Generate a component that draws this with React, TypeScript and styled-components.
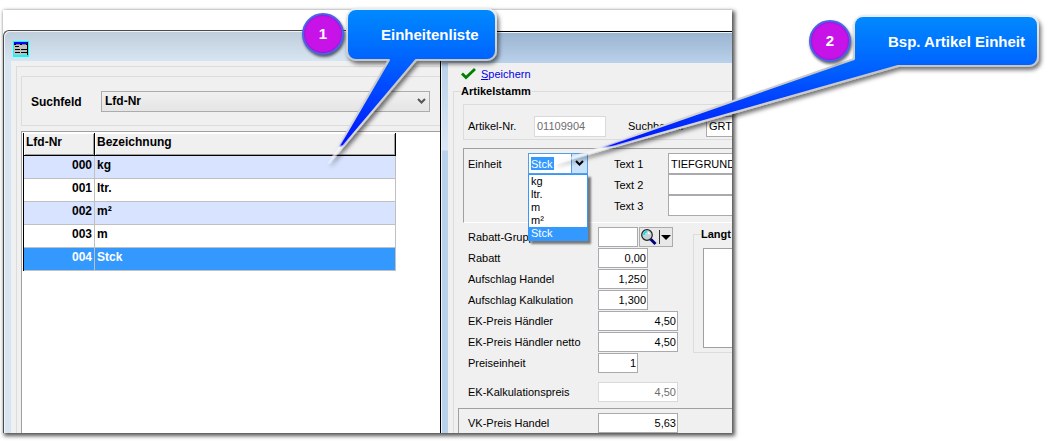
import React from 'react';
import styled, { createGlobalStyle, css } from 'styled-components';

const Global = createGlobalStyle`
  * { box-sizing: border-box; }
  body {
    margin: 0;
    background: #fff;
    color: #000;
    font-family: 'Liberation Sans', Arial, sans-serif;
    font-size: 11px;
    line-height: 14px;
  }
  input, select, textarea, button { font: inherit; color: inherit; }
`;

const boldText = css`
  font-size: 12px;
  font-weight: 700;
`;

const Page = styled.main`
  position: relative;
  min-width: 1051px;
  padding: 10px 319px 8px 3px;
`;

const Shot = styled.div`
  padding-top: 20px;
  overflow: hidden;
  background: #fff;
  box-shadow: 2px 2px 4px 1px rgba(0, 0, 0, 0.65), 0 0 2px rgba(0, 0, 0, 0.15);
`;

const Desktop = styled.div`
  display: grid;
  grid-template-columns: 437px minmax(0, 1fr);
`;

/* ---------- list window ---------- */

const ListWindow = styled.section`
  display: flex;
  flex-direction: column;
  border: solid #4a4a4a;
  border-width: 1px 0 0 1px;
  border-radius: 6px 0 0 0;
  padding-left: 7px;
  background: linear-gradient(#bfcddb, #d7e4f1 30px);
  box-shadow: inset 1px 1px 0 #eef4fa;
`;

const ListTitle = styled.header`
  height: 30px;
  padding: 10px 0 0 2px;
`;

const ListBody = styled.div`
  flex: 1;
  display: flex;
  padding: 5px 0 0 5px;
  background: #f0f0f0;
`;

const ListFrame = styled.div`
  flex: 1;
  display: flex;
  flex-direction: column;
  gap: 5px;
  padding: 9px 0 0 4px;
  border: solid #dcdcdc;
  border-width: 1px 0 0 1px;
`;

const SearchBar = styled.div`
  display: flex;
  align-items: center;
  height: 50px;
  padding-left: 9px;
  border: solid #dcdcdc;
  border-width: 1px 0 1px 1px;
  ${boldText}
`;

const SearchLabel = styled.label`
  width: 70px;
  padding-top: 2px;
`;

const SelectWrap = styled.div`
  position: relative;
  flex: 1;
  margin-right: 10px;
`;

const SearchSelect = styled.select`
  display: block;
  width: 100%;
  height: 21px;
  padding: 0 3px;
  appearance: none;
  border: 1px solid #acacac;
  border-radius: 0;
  background: linear-gradient(#f0f0f0, #e5e5e5);
`;

const Arrow = styled.svg`
  position: absolute;
  right: 4px;
  top: 7px;
  pointer-events: none;
`;

const TableArea = styled.div`
  flex: 1;
  padding: 1px 0 0 1px;
  border: solid #a0a0a0;
  border-width: 1px 0 0 1px;
  background: #fff;
`;

const Table = styled.table`
  width: 373px;
  border-collapse: separate;
  border-spacing: 0;
  table-layout: fixed;
  border-left: 1px solid #000;
  ${boldText}
`;

const HeadCell = styled.th<{ $w?: number }>`
  width: ${p => (p.$w ? `${p.$w}px` : 'auto')};
  height: 23px;
  padding: 0 2px 4px;
  text-align: left;
  background: #f0f0f0;
  border: solid #000;
  border-width: 0 1px 1px 0;
  box-shadow: inset 1px 1px 0 #fff, inset -1px -1px 0 #a0a0a0;
`;

const Row = styled.tr<{ $tone: 'even' | 'odd' | 'active' }>`
  background: ${p => ({ even: '#d7e3ff', odd: '#fff', active: '#3399ff' })[p.$tone]};
  color: ${p => (p.$tone === 'active' ? '#fff' : '#000')};
`;

const Cell = styled.td<{ $right?: boolean }>`
  height: 23px;
  padding: 0 2px 4px;
  text-align: ${p => (p.$right ? 'right' : 'left')};
  border: solid #c0c0c0;
  border-width: 0 1px 1px 0;
`;

/* ---------- article window ---------- */

const ArticleWindow = styled.section`
  display: flex;
  flex-direction: column;
  margin-top: 1px;
  border: solid #000;
  border-width: 1px 0 0 1px;
  padding-left: 7px;
  background: linear-gradient(#9ab3cf, #b9d1ea 31px, #dbe8f6 118px, #b9d1ea 119px);
  box-shadow: inset 1px 1px 0 #eef4fa;
`;

const ArticleTitle = styled.header`
  height: 31px;
`;

const ArticleBody = styled.div`
  flex: 1;
  padding-left: 5px;
  background: #f0f0f0;
`;

const Toolbar = styled.div`
  display: flex;
  align-items: center;
  gap: 5px;
  height: 21px;
  padding-left: 8px;
`;

const SaveLink = styled.a`
  color: #0000e8;
  text-decoration: none;
`;

const Group = styled.fieldset`
  min-width: 0;
  margin: 0;
  padding: 6px 0 0 4px;
  border: solid #dcdcdc;
  border-width: 1px 0 0 1px;
`;

const Legend = styled.legend`
  height: 14px;
  margin-left: 3px;
  padding: 0 1px 0 0;
  white-space: nowrap;
  font-weight: 700;
`;

const NumberPanel = styled.div`
  display: flex;
  align-items: center;
  height: 36px;
  margin: 0 0 8px 5px;
  padding: 8px 0 0 4px;
  border: solid #dcdcdc;
  border-width: 1px 0 1px 1px;
`;

const UnitPanel = styled.div`
  display: flex;
  align-items: flex-start;
  height: 75px;
  margin: 0 0 4px 5px;
  padding: 4px 0 0 4px;
  border: solid #a0a0a0;
  border-width: 1px 0 1px 1px;
  border-bottom-color: #fff;
`;

const Label = styled.label<{ $w: number }>`
  flex: none;
  width: ${p => p.$w}px;
  white-space: nowrap;
`;

const Field = styled.input<{ $w?: number; $right?: boolean; $open?: boolean }>`
  display: block;
  flex: ${p => (p.$w ? 'none' : '1 1 0')};
  width: ${p => (p.$w ? `${p.$w}px` : 'auto')};
  min-width: 0;
  height: ${p => (p.$right ? 20 : 21)}px;
  padding: 0 ${p => (p.$open ? 0 : 1)}px 0 2px;
  border: 1px solid #a9a9ae;
  border-right-width: ${p => (p.$open ? 0 : 1)}px;
  border-radius: 0;
  background: #fff;
  text-align: ${p => (p.$right ? 'right' : 'left')};
  &:disabled { color: #6d6d6d; border-color: #d9d9d9; }
`;

const NumberField = styled(Field)`
  margin-right: 22px;
`;

const Combo = styled.div`
  position: relative;
  flex: none;
  width: 60px;
  margin-right: 26px;
`;

const UnitSelect = styled.select`
  display: block;
  width: 100%;
  height: 21px;
  padding: 0 2px;
  appearance: none;
  border: 1px solid #569de5;
  border-radius: 0;
  color: #fff;
  background:
    linear-gradient(#3399ff, #3399ff) 2px 3px / 23px 13px no-repeat,
    linear-gradient(#569de5, #569de5) 42px 0 / 1px 100% no-repeat,
    linear-gradient(#c9e2fb, #c9e2fb) 43px 0 / 100% 100% no-repeat,
    #fff;
`;

const Menu = styled.ul`
  position: absolute;
  z-index: 1;
  left: 0;
  top: 21px;
  width: 60px;
  margin: 0;
  padding: 0;
  list-style: none;
  border: 1px solid #3399ff;
  background: #fff;
  box-shadow: 3px 3px 2px rgba(0, 0, 0, 0.5);
`;

const MenuItem = styled.li<{ $active?: boolean }>`
  height: 13px;
  padding-left: 2px;
  line-height: 13px;
  background: ${p => (p.$active ? '#3399ff' : 'transparent')};
  color: ${p => (p.$active ? '#fff' : '#000')};
`;

const TextRows = styled.div`
  flex: 1;
  min-width: 0;
`;

const TextRow = styled.div`
  display: flex;
  align-items: center;
  height: 21px;
`;

const Details = styled.div`
  display: flex;
  align-items: flex-start;
  padding-left: 10px;
`;

const Prices = styled.div`
  flex: none;
  display: flex;
  flex-direction: column;
  gap: 1px;
  width: 225px;
`;

const PriceRow = styled.div<{ $spaced?: boolean }>`
  display: flex;
  align-items: center;
  height: 20px;
  margin-top: ${p => (p.$spaced ? 8 : 0)}px;
`;

const LookupButton = styled.button`
  display: block;
  width: 34px;
  height: 20px;
  margin-left: 1px;
  padding: 0;
  border: 1px solid #acacac;
  background: #e8e8e8;
`;

const LongText = styled(Group)`
  flex: 1;
  padding: 7px 0 4px 4px;
  border-bottom-width: 1px;
`;

const LongTextArea = styled.textarea`
  display: block;
  width: calc(100% - 5px);
  height: 100px;
  margin-left: 5px;
  resize: none;
  border: 1px solid #a0a0a0;
  border-right: 0;
  border-radius: 0;
  background: #fff;
`;

const SalesPanel = styled.div`
  margin-top: 6px;
  padding: 4px 0 0 9px;
  border: solid #a0a0a0;
  border-width: 1px 0 0 1px;
`;

/* ---------- callouts ---------- */

const Callouts = styled.div`
  position: absolute;
  left: 0;
  top: 0;
  z-index: 2;
  pointer-events: none;
  font-size: 15px;
  font-weight: 700;
  line-height: 20px;
  color: #fff;
`;

const Bubbles = styled.svg`
  display: block;
`;

const Caption = styled.span<{ $x: number; $y: number }>`
  position: absolute;
  left: ${p => p.$x}px;
  top: ${p => p.$y}px;
  white-space: nowrap;
`;

const Badge = styled.span<{ $x: number; $y: number }>`
  position: absolute;
  left: ${p => p.$x}px;
  top: ${p => p.$y}px;
  width: 42px;
  height: 42px;
  border: 2px solid #4a63ea;
  border-radius: 50%;
  line-height: 38px;
  text-align: center;
  background: #c813e8;
  box-shadow: 1px 2px 3px rgba(0, 0, 0, 0.6), inset 0 0 2px #3030b0;
`;

const units = ['kg', 'ltr.', 'm', 'm²', 'Stck'];
const listRows = [
  ['000', 'kg'],
  ['001', 'ltr.'],
  ['002', 'm²'],
  ['003', 'm'],
  ['004', 'Stck'],
];
const prices = [
  { label: 'Rabatt', value: '0,00', w: 50 },
  { label: 'Aufschlag Handel', value: '1,250', w: 50 },
  { label: 'Aufschlag Kalkulation', value: '1,300', w: 50 },
  { label: 'EK-Preis Händler', value: '4,50', w: 80 },
  { label: 'EK-Preis Händler netto', value: '4,50', w: 80 },
  { label: 'Preiseinheit', value: '1', w: 40 },
  { label: 'EK-Kalkulationspreis', value: '4,50', w: 80, disabled: true },
];

const TableIcon = () => (
  <svg width="16" height="16" shapeRendering="crispEdges" aria-hidden="true">
    <rect width="16" height="16" fill="#00ffff" />
    <rect x="1" y="1" width="14" height="13" fill="#c0c0c0" />
    <rect x="1" y="1" width="13" height="2" fill="#0000ff" />
    <rect x="1" y="3" width="13" height="1" fill="#000" />
    <rect x="3" y="3" width="4" height="1" fill="#808080" />
    <rect x="9" y="3" width="4" height="1" fill="#808080" />
    <rect x="2" y="5" width="4" height="1" fill="#000" />
    <rect x="2" y="8" width="5" height="1" fill="#000" />
    <rect x="8" y="8" width="6" height="1" fill="#000" />
    <rect x="2" y="11" width="5" height="1" fill="#000" />
    <rect x="8" y="11" width="6" height="1" fill="#000" />
    <rect x="14" y="1" width="1" height="13" fill="#000" />
  </svg>
);

const Chevron = ({ color }: { color: string }) => (
  <Arrow width="9" height="7" viewBox="0 0 9 7" aria-hidden="true">
    <path d="M1 1l3.5 3.5L8 1" fill="none" stroke={color} strokeWidth="2" />
  </Arrow>
);

const CheckIcon = () => (
  <svg width="15" height="14" viewBox="0 0 15 14" aria-hidden="true">
    <path d="M1 6.5l4 4L14 2" fill="none" stroke="#008000" strokeWidth="2.8" />
  </svg>
);

const LookupIcon = () => (
  <svg width="32" height="18" viewBox="0 0 32 18" aria-hidden="true">
    <path d="M10.5 11l5 5" stroke="#000080" strokeWidth="3" />
    <circle cx="7" cy="7" r="5.3" fill="#c4d4d4" stroke="#222" strokeWidth="1.2" />
    <path d="M4 7a3.5 3.5 0 0 1 3-3.5" fill="none" stroke="#00e5f5" strokeWidth="1.5" />
    <path d="M8 4.5l1.5 1.5" stroke="#fff" strokeWidth="1.5" />
    <path d="M19.5 2v14" stroke="#333" />
    <path d="M21 7h10l-5 5z" fill="#000" />
  </svg>
);

const BubbleShapes = () => (
  <Bubbles width="1051" height="180" aria-hidden="true">
    <defs>
      <linearGradient id="one" gradientUnits="userSpaceOnUse" x1="0" y1="9" x2="0" y2="163">
        <stop offset="0" stopColor="#008aff" />
        <stop offset="0.33" stopColor="#0063ff" />
        <stop offset="0.88" stopColor="#0014ff" />
        <stop offset="0.9" stopColor="#fff" stopOpacity="0.8" />
        <stop offset="1" stopColor="#fff" stopOpacity="0.2" />
      </linearGradient>
      <linearGradient id="two" gradientUnits="userSpaceOnUse" x1="0" y1="16" x2="0" y2="163">
        <stop offset="0" stopColor="#008aff" />
        <stop offset="0.34" stopColor="#0063ff" />
        <stop offset="0.88" stopColor="#0014ff" />
        <stop offset="0.9" stopColor="#fff" stopOpacity="0.9" />
        <stop offset="1" stopColor="#fff" stopOpacity="0.3" />
      </linearGradient>
      <linearGradient id="rim" x1="0" y1="0" x2="0" y2="1">
        <stop offset="0" stopColor="#e9eef5" />
        <stop offset="0.35" stopColor="#c4c4c4" />
        <stop offset="0.8" stopColor="#d8d8d8" />
        <stop offset="1" stopColor="#fff" stopOpacity="0.3" />
      </linearGradient>
      <filter id="drop" x="-10%" y="-10%" width="120%" height="125%">
        <feDropShadow dx="2" dy="3" stdDeviation="2" floodColor="#000" floodOpacity="0.55" />
      </filter>
    </defs>
    <g stroke="url(#rim)" strokeWidth="2" strokeLinejoin="round" filter="url(#drop)">
      <path
        fill="url(#one)"
        d="M355 9H487a9 9 0 0 1 9 9V51a9 9 0 0 1-9 9H416L329 163L389 60H356a9 9 0 0 1-9-9V18a9 9 0 0 1 9-9Z"
      />
      <path
        fill="url(#two)"
        d="M862 16H1029a9 9 0 0 1 9 9V57a9 9 0 0 1-9 9H898L556 163L854 59V25a9 9 0 0 1 9-9Z"
      />
    </g>
  </Bubbles>
);

export default function App() {
  return (
    <Page>
      <Global />
      <Shot>
        <Desktop>
          <ListWindow>
            <ListTitle><TableIcon /></ListTitle>
            <ListBody>
              <ListFrame>
                <SearchBar>
                  <SearchLabel htmlFor="search">Suchfeld</SearchLabel>
                  <SelectWrap>
                    <SearchSelect id="search"><option>Lfd-Nr</option></SearchSelect>
                    <Chevron color="#555" />
                  </SelectWrap>
                </SearchBar>
                <TableArea>
                  <Table>
                    <thead>
                      <tr>
                        <HeadCell $w={71}>Lfd-Nr</HeadCell>
                        <HeadCell>Bezeichnung</HeadCell>
                      </tr>
                    </thead>
                    <tbody>
                      {listRows.map(([nr, name], i) => (
                        <Row key={nr} $tone={i === 4 ? 'active' : i % 2 ? 'odd' : 'even'}>
                          <Cell $right>{nr}</Cell>
                          <Cell>{name}</Cell>
                        </Row>
                      ))}
                    </tbody>
                  </Table>
                </TableArea>
              </ListFrame>
            </ListBody>
          </ListWindow>

          <ArticleWindow>
            <ArticleTitle />
            <ArticleBody>
              <Toolbar>
                <CheckIcon />
                <SaveLink href="#save"><u>S</u>peichern</SaveLink>
              </Toolbar>
              <Group>
                <Legend>Artikelstamm</Legend>
                <NumberPanel>
                  <Label $w={66} htmlFor="nr">Artikel-Nr.</Label>
                  <NumberField id="nr" $w={72} disabled defaultValue="01109904" />
                  <Label $w={78} htmlFor="term">Suchbegriff</Label>
                  <Field id="term" $open defaultValue="GRT" />
                </NumberPanel>
                <UnitPanel>
                  <TextRow>
                    <Label $w={60} htmlFor="unit">Einheit</Label>
                    <Combo>
                      <UnitSelect id="unit" defaultValue="Stck">
                        {units.map(u => <option key={u}>{u}</option>)}
                      </UnitSelect>
                      <Chevron color="#000" />
                      <Menu>
                        {units.map(u => <MenuItem key={u} $active={u === 'Stck'}>{u}</MenuItem>)}
                      </Menu>
                    </Combo>
                  </TextRow>
                  <TextRows>
                    {['TIEFGRUND', '', ''].map((text, i) => (
                      <TextRow key={i}>
                        <Label $w={54} htmlFor={`text${i}`}>Text {i + 1}</Label>
                        <Field id={`text${i}`} $open defaultValue={text} />
                      </TextRow>
                    ))}
                  </TextRows>
                </UnitPanel>
                <Details>
                  <Prices>
                    <PriceRow>
                      <Label $w={130} htmlFor="group">Rabatt-Gruppe</Label>
                      <Field id="group" $w={40} $right />
                      <LookupButton aria-label="Rabatt-Gruppe suchen"><LookupIcon /></LookupButton>
                    </PriceRow>
                    {prices.map(p => (
                      <PriceRow key={p.label} $spaced={p.disabled}>
                        <Label $w={130} htmlFor={p.label}>{p.label}</Label>
                        <Field id={p.label} $w={p.w} $right disabled={p.disabled} defaultValue={p.value} />
                      </PriceRow>
                    ))}
                  </Prices>
                  <LongText>
                    <Legend>Langt</Legend>
                    <LongTextArea aria-label="Langtext" />
                  </LongText>
                </Details>
                <SalesPanel>
                  <PriceRow>
                    <Label $w={130} htmlFor="sale">VK-Preis Handel</Label>
                    <Field id="sale" $w={80} $right defaultValue="5,63" />
                  </PriceRow>
                </SalesPanel>
              </Group>
            </ArticleBody>
          </ArticleWindow>
        </Desktop>
      </Shot>

      <Callouts>
        <BubbleShapes />
        <Badge $x={302} $y={13}>1</Badge>
        <Caption $x={381} $y={25}>Einheitenliste</Caption>
        <Badge $x={809} $y={20}>2</Badge>
        <Caption $x={888} $y={32}>Bsp. Artikel Einheit</Caption>
      </Callouts>
    </Page>
  );
}
